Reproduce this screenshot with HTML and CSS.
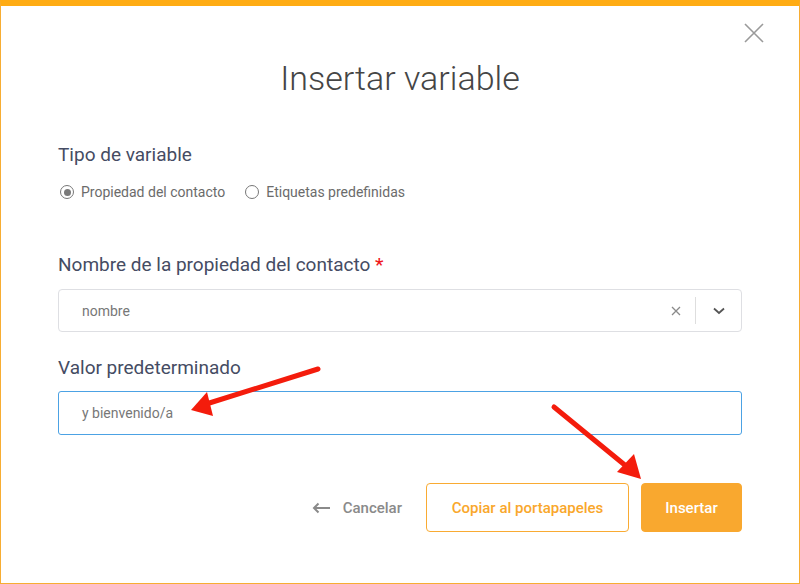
FILE: index.html
```html
<!DOCTYPE html>
<html lang="es">

	<head>

		<meta charset="utf-8">

		<title>Insertar variable</title>

		<link rel="stylesheet" href="styles.css">

	</head>

	<body>

		<div class="modal">

			<button class="close" aria-label="Cerrar">
				<svg width="20" height="20" viewBox="0 0 20 20"><path d="M1 1 L19 19 M19 1 L1 19" stroke="#9a9a9a" stroke-width="1.6" fill="none"/></svg>
			</button>

			<h1 class="title">Insertar variable</h1>

			<div class="field">

				<div class="label">Tipo de variable</div>

				<div class="radios">
					<label class="radio"><span class="dot checked"></span>Propiedad del contacto</label>
					<label class="radio"><span class="dot"></span>Etiquetas predefinidas</label>
				</div>

			</div>

			<div class="field">

				<div class="label">Nombre de la propiedad del contacto <span class="req">*</span></div>

				<div class="select">
					<span class="value">nombre</span>
					<span class="clear">
						<svg width="10" height="10" viewBox="0 0 10 10"><path d="M1 1 L9 9 M9 1 L1 9" stroke="#8a8a8a" stroke-width="1.3" fill="none"/></svg>
					</span>
					<span class="sep"></span>
					<span class="chev">
						<svg width="12" height="8" viewBox="0 0 12 8"><path d="M1 1.5 L6 6 L11 1.5" stroke="#555" stroke-width="1.8" fill="none"/></svg>
					</span>
				</div>

			</div>

			<div class="field second">

				<div class="label">Valor predeterminado</div>

				<div class="input">y bienvenido/a</div>

			</div>

			<div class="actions">
				<button class="cancel">
					<svg width="19" height="12" viewBox="0 0 19 12"><path d="M18 6 L2 6 M6.5 1.5 L2 6 L6.5 10.5" stroke="#8a8a8a" stroke-width="2" fill="none"/></svg>
					Cancelar
				</button>
				<button class="copy">Copiar al portapapeles</button>
				<button class="insert">Insertar</button>
			</div>

		</div>

		<svg class="arrows" width="800" height="584" viewBox="0 0 800 584">
			<path d="M318 369 L203 405" stroke="#f41c0c" stroke-width="5" stroke-linecap="round" fill="none"/>
			<polygon points="191,410 207,392 213,416" fill="#f41c0c"/>
			<path d="M554 407 L626 466" stroke="#f41c0c" stroke-width="5" stroke-linecap="round" fill="none"/>
			<polygon points="641,479 617,472 634,454" fill="#f41c0c"/>
		</svg>

	</body>

</html>
```

FILE: styles.css
```css
html, body {

	margin: 0;

	width: 100%;
	height: 100%;

	font-family: Roboto, "Liberation Sans", sans-serif;

}

.modal {

	position: relative;

	box-sizing: border-box;
	width: 800px;
	height: 584px;

	border: 1px solid #f7ad33;
	border-top: 6px solid #ffac14;

	padding: 52px 57px 0 57px;

	background: #ffffff;

}

.close {
	position: absolute;
	top: 17px;
	right: 35px;
	padding: 0;
	border: 0;
	background: transparent;
	cursor: pointer;
}

.title {

	margin: 0;

	height: 40px;
	line-height: 40px;

	text-align: center;

	font-size: 34px;
	font-weight: 300;
	color: #454545;

}

.field {
	margin-top: 45px;
}

.field + .field {
	margin-top: 51px;
}

.field.second {
	margin-top: 24px;
}

.label {
	height: 24px;
	line-height: 24px;
	font-size: 19px;
	color: #454c63;
}

.req {
	color: #f0191c;
	font-weight: 500;
}

.radios {
	display: flex;
	gap: 18px;
	margin-top: 15px;
	height: 20px;
	line-height: 20px;
	font-size: 14px;
	color: #6b6b6b;
}

.radio {
	display: flex;
	align-items: center;
	gap: 7px;
}

.dot {
	box-sizing: border-box;
	width: 14px;
	height: 14px;
	border: 1.5px solid #777777;
	border-radius: 50%;
	margin-left: 2px;
	display: flex;
	align-items: center;
	justify-content: center;
}

.dot.checked::after {
	content: "";
	width: 7px;
	height: 7px;
	border-radius: 50%;
	background: #7a7a7a;
}

.select {
	margin-top: 12px;
	box-sizing: border-box;
	height: 43px;
	border: 1px solid #dedfe3;
	border-radius: 4px;
	display: flex;
	align-items: center;
	padding-left: 23px;
	font-size: 14px;
	color: #777777;
}

.select .value {
	flex: 1;
}

.select .clear {
	display: flex;
	margin-right: 14px;
}

.select .sep {
	width: 1px;
	height: 27px;
	background: #dedede;
}

.select .chev {
	display: flex;
	width: 45px;
	justify-content: center;
}

.input {
	margin-top: 11px;
	box-sizing: border-box;
	height: 44px;
	line-height: 42px;
	border: 1px solid #4ca2e4;
	border-radius: 3px;
	padding-left: 23px;
	font-size: 14px;
	color: #777777;
}

.actions {
	margin-top: 48px;
	display: flex;
	justify-content: flex-end;
	align-items: center;
	gap: 12px;
}

.actions button {
	font-family: Roboto, "Liberation Sans", sans-serif;
	font-size: 15px;
	font-weight: 500;
	height: 49px;
	border-radius: 4px;
	cursor: pointer;
}

.cancel {
	display: flex;
	align-items: center;
	gap: 12px;
	background: transparent;
	border: 0;
	color: #8a8a8a;
	padding: 0;
	margin-right: 12px;
}

.copy {
	width: 203px;
	background: #ffffff;
	border: 1px solid #f9ab33;
	color: #f9a72b;
}

.insert {
	width: 101px;
	background: #f9a82f;
	border: 1px solid #f9a82f;
	color: #ffffff;
}

.arrows {
	position: absolute;
	top: 0;
	left: 0;
	pointer-events: none;
}
```
